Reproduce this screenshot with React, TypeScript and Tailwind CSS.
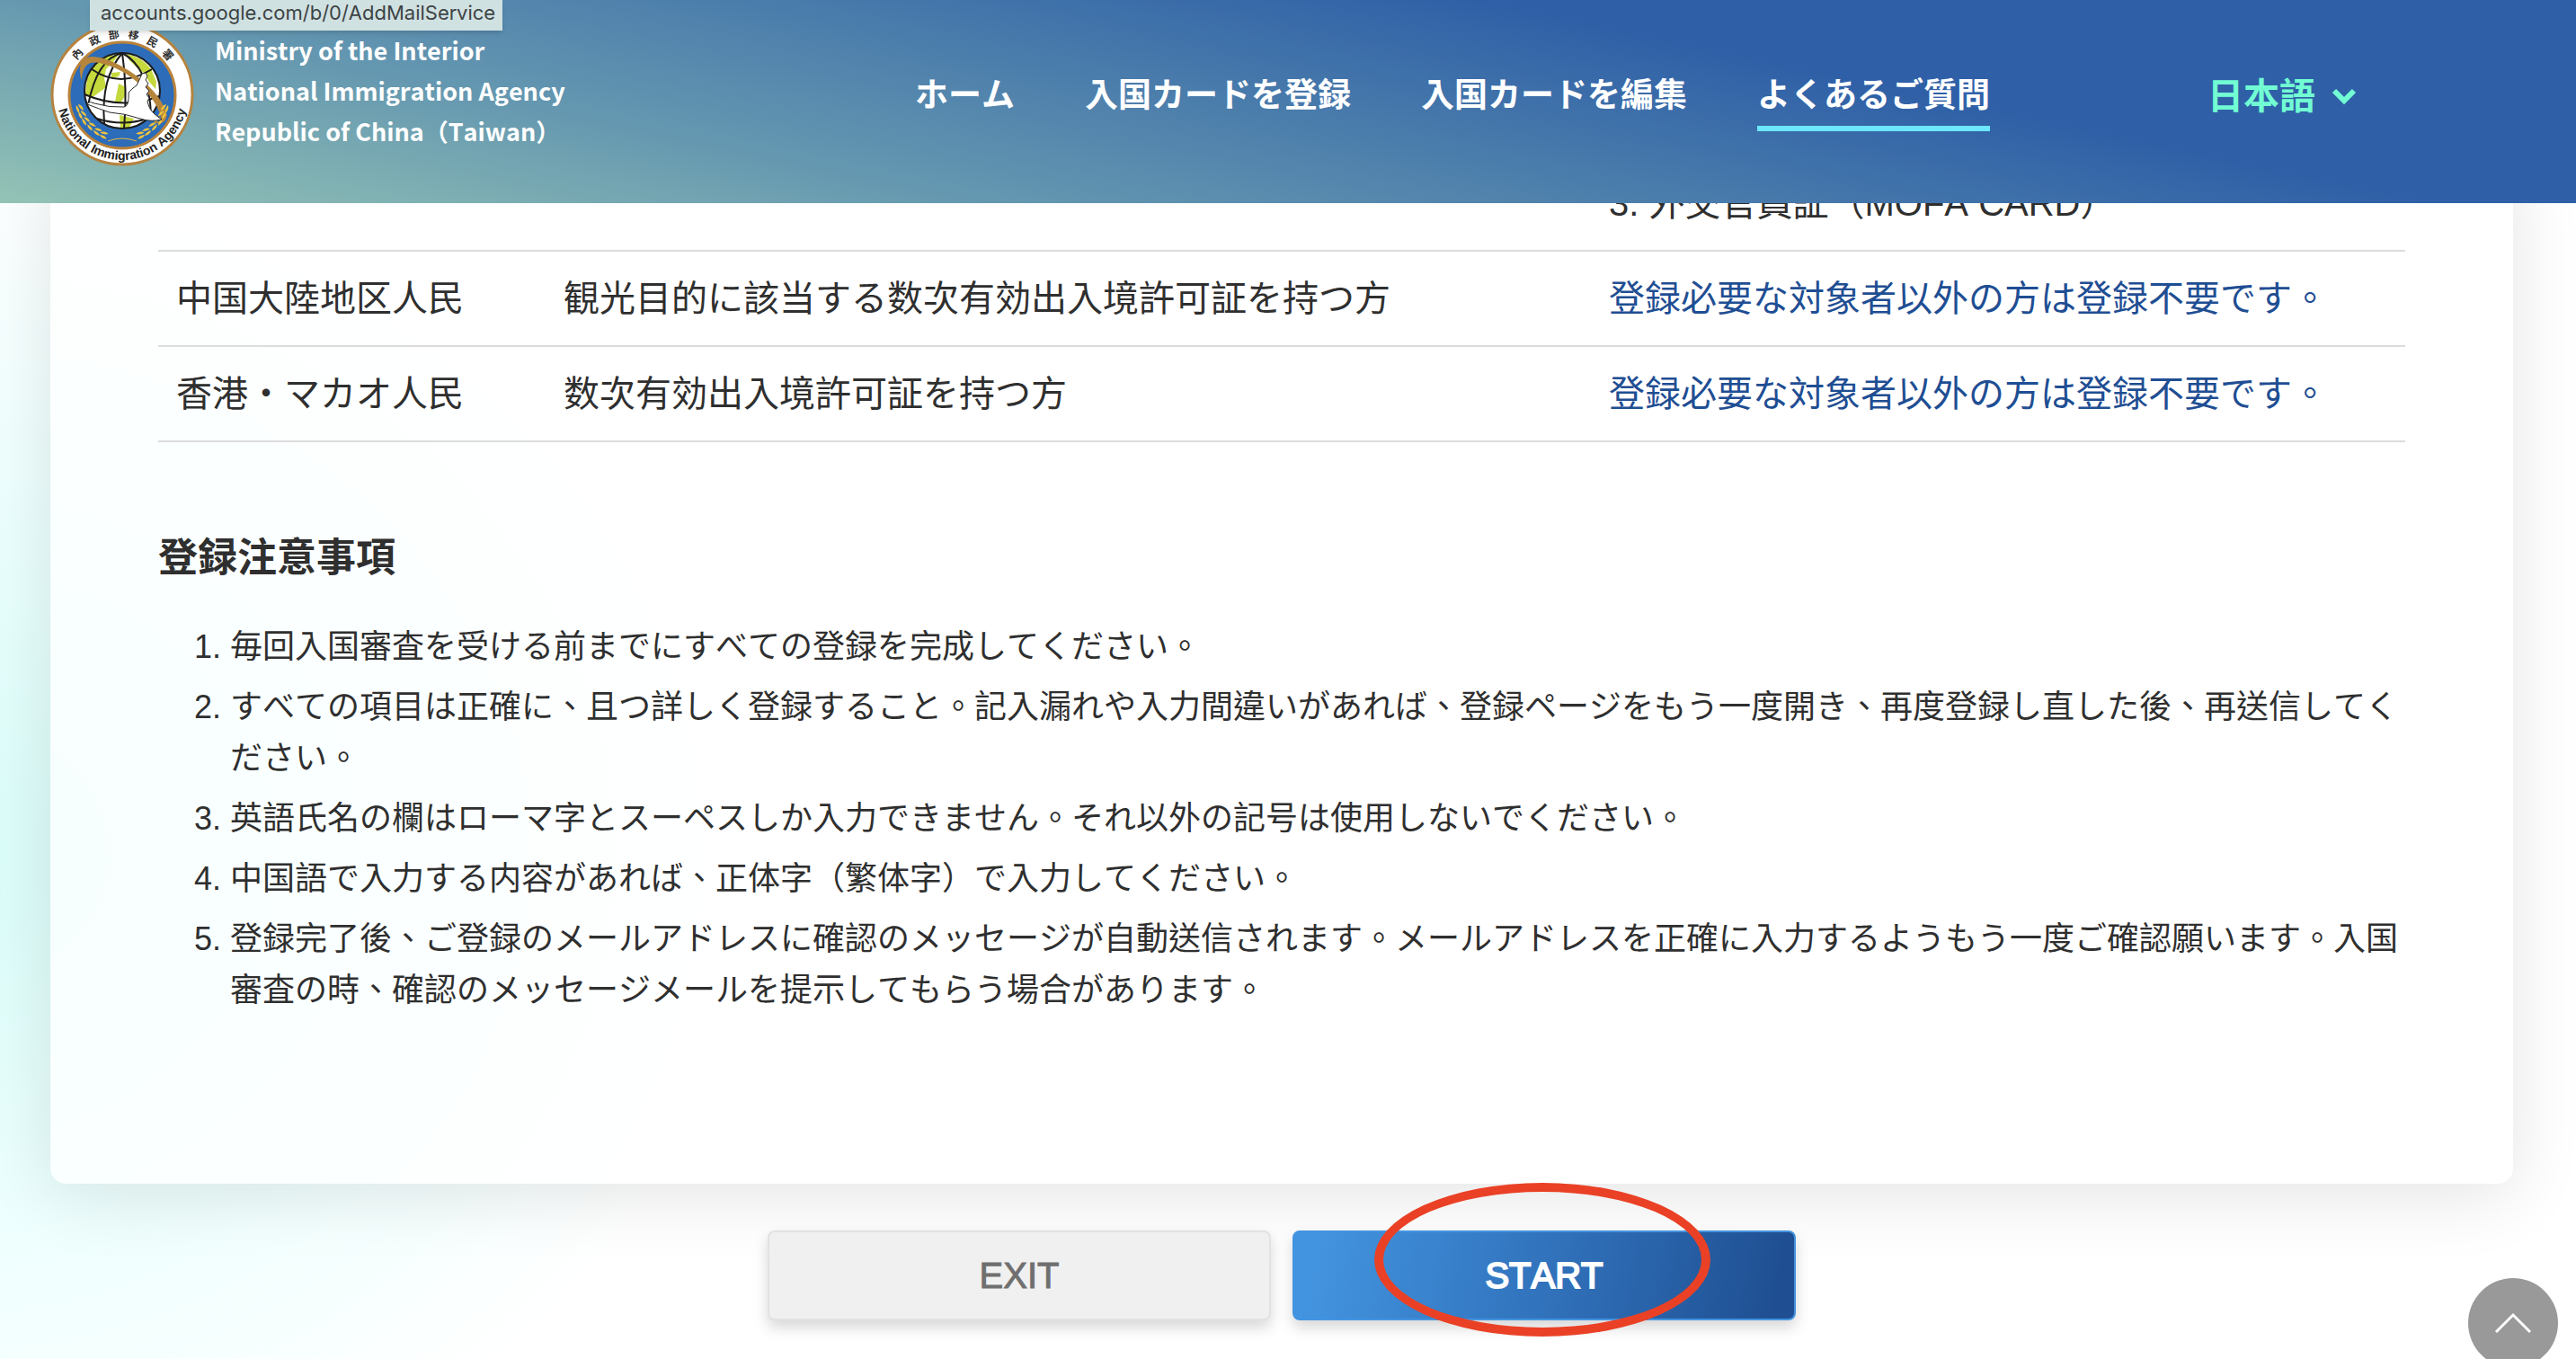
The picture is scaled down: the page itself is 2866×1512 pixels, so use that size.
interface PermitRow {
  who: string;
  permit: string;
  note: string;
  link?: boolean;
}

const NAV_ITEMS = ['ホーム', '入国カードを登録', '入国カードを編集', 'よくあるご質問'];
const ACTIVE_ITEM = 'よくあるご質問';

const ROWS: PermitRow[] = [
  { who: '', permit: '', note: '3. 外交官員証（MOFA CARD）' },
  {
    who: '中国大陸地区人民',
    permit: '観光目的に該当する数次有効出入境許可証を持つ方',
    note: '登録必要な対象者以外の方は登録不要です。',
    link: true,
  },
  {
    who: '香港・マカオ人民',
    permit: '数次有効出入境許可証を持つ方',
    note: '登録必要な対象者以外の方は登録不要です。',
    link: true,
  },
];

const NOTES = [
  '毎回入国審査を受ける前までにすべての登録を完成してください。',
  'すべての項目は正確に、且つ詳しく登録すること。記入漏れや入力間違いがあれば、登録ページをもう一度開き、再度登録し直した後、再送信してください。',
  '英語氏名の欄はローマ字とスーペスしか入力できません。それ以外の記号は使用しないでください。',
  '中国語で入力する内容があれば、正体字（繁体字）で入力してください。',
  '登録完了後、ご登録のメールアドレスに確認のメッセージが自動送信されます。メールアドレスを正確に入力するようもう一度ご確認願います。入国審査の時、確認のメッセージメールを提示してもらう場合があります。',
];

const SEAL_CHARS = [
  { char: '內', angle: -48 },
  { char: '政', angle: -27 },
  { char: '部', angle: -8 },
  { char: '移', angle: 11 },
  { char: '民', angle: 30 },
  { char: '署', angle: 49 },
];

// Leaves of the left laurel branch; the right one is mirrored
const LEAVES = [
  [32, 95, 60],
  [35, 102, 55],
  [39, 109, 50],
  [45, 115, 38],
  [52, 121, 28],
  [59, 125, 18],
];

function Laurel() {
  return (
    <g fill="#f0c33c">
      {LEAVES.map(([x, y, angle]) => (
        <g key={y} transform={`translate(${x} ${y}) rotate(${angle})`}>
          <path d="M-4 -1Q-1 -5 5 -3Q2 0 -4 -1Z" />
          <path d="M-4 1Q-1 5 5 3Q2 0 -4 1Z" />
        </g>
      ))}
    </g>
  );
}

function AgencySeal() {
  return (
    <svg className="size-40 shrink-0" viewBox="0 0 160 160" role="img" aria-label="National Immigration Agency">
      <circle cx="80" cy="80" r="78" fill="#fff" stroke="#b58340" strokeWidth="3" />
      <circle cx="80" cy="81" r="59" fill="#2c6cb9" stroke="#b9823a" strokeWidth="3" />

      {/* Ring lettering */}
      <g fill="#333" fontSize="12" fontWeight="700" textAnchor="middle" fontFamily="'Noto Sans CJK TC', sans-serif">
        {SEAL_CHARS.map(({ char, angle }) => (
          <text key={char} x="80" y="17" transform={`rotate(${angle} 80 80)`}>{char}</text>
        ))}
      </g>
      <path id="seal-arc" d="M7 80A73 73 0 0 0 153 80" fill="none" />
      <text fill="#222" fontSize="14" fontWeight="700" textAnchor="middle" fontFamily="'Liberation Sans', sans-serif">
        <textPath href="#seal-arc" startOffset="50%">National Immigration Agency</textPath>
      </text>

      {/* Globe */}
      <circle cx="80" cy="76" r="42" fill="#fff" />
      <g fill="#c5d93c">
        <path d="M41 62Q47 46 60 38L76 36L70 44L62 52L60 62L62 72L54 78L46 84L39 80Z" />
        <path d="M84 35Q102 38 112 52L118 66L117 74L110 66L104 56L96 50L88 42Z" />
        <path d="M76 68L84 72L83 82L78 90L72 88L74 78Z" />
        <path d="M77 103L93 107L88 117L78 118Z" />
        <path d="M68 56L78 55L76 60L68 62Z" />
      </g>
      <g fill="none" stroke="#1c1c1c" strokeWidth="2">
        <circle cx="80" cy="76" r="42" />
        <path d="M80 34Q52 40 42 92" />
        <path d="M80 34Q56 62 60 112" />
        <path d="M80 34Q86 74 82 118" />
        <path d="M80 34Q110 50 112 102" />
        <path d="M46 52Q78 74 113 52" />
        <path d="M38 80Q80 98 121 82" />
        <path d="M52 107Q80 116 108 107" />
      </g>

      {/* Orbit */}
      <path
        d="M35 64C30 50 34 39 46 38C72 38 124 72 130 104L124 112C124 92 96 55 58 46C44 42 36 46 35 64Z"
        fill="#b5853c"
      />
      <path d="M128 102Q129 113 116 111" fill="none" stroke="#b5853c" strokeWidth="2" />

      <Laurel />
      <g transform="translate(160 0) scale(-1 1)">
        <Laurel />
      </g>
      <path d="M64 132Q80 126 96 132" fill="none" stroke="#e2b93b" strokeWidth="1" />

      {/* Dove */}
      <path
        d="M41 90Q44 87 49 90Q66 95 82 94Q88 93 87 78Q90 74 96 70Q100 62 102 57L106 56L108 60L106 64L109 68L106 72L110 76L107 80L110 84L108 88L110 94Q112 100 124 108Q112 111 100 107Q82 101 66 100Q54 96 41 91Z"
        fill="#fff"
        stroke="#2a2a2a"
        strokeWidth="1"
      />
    </svg>
  );
}

export default function App() {
  return (
    <div className="relative min-h-screen overflow-hidden bg-white bg-[radial-gradient(ellipse_900px_780px_at_-60px_950px,#d9fdf9_0%,#ecfffe_50%,#ffffff_100%)] font-['Liberation_Sans','Noto_Sans_CJK_TC',sans-serif] text-[#2f2f2f] [font-kerning:none]">
      {/* Header */}
      <header className="relative z-10 flex h-[226px] items-start bg-[linear-gradient(12deg,#94c3b5_0%,#6598b0_28%,#2f60a7_69%)] pl-14">
        <a href="#home" className="mt-[25px] flex items-start gap-[23px]">
          <AgencySeal />
          <span className="mt-2 font-['Noto_Sans_CJK_TC',sans-serif] text-[27px] leading-[45px] font-bold whitespace-nowrap text-white">
            Ministry of the Interior
            <br />
            National Immigration Agency
            <br />
            Republic of China（Taiwan）
          </span>
        </a>

        <div className="mt-[74px] mr-[244px] ml-auto flex items-start gap-[242px]">
          <nav className="flex gap-[78px] text-[37px] leading-[66px] font-bold whitespace-nowrap text-white">
            {NAV_ITEMS.map((item) => (
              <a
                key={item}
                href="#nav"
                aria-current={item === ACTIVE_ITEM ? 'page' : undefined}
                className={`border-b-6 ${item === ACTIVE_ITEM ? 'border-[#6ce7fd]' : 'border-transparent'}`}
              >
                {item}
              </a>
            ))}
          </nav>
          <button className="flex items-center gap-[18px] text-[40px] leading-[66px] font-bold whitespace-nowrap text-[#72fcd3]">
            日本語
            <svg width="28" height="20" viewBox="0 0 28 20" fill="none" stroke="currentColor" strokeWidth="6">
              <path d="M3 4l11 11L25 4" />
            </svg>
          </button>
        </div>
      </header>

      {/* Link preview */}
      <div className="absolute top-0 left-[100px] z-20 bg-[#d0e1e2] pr-2 pb-1.5 pl-3 font-[Inter,sans-serif] text-[22px] leading-7 text-[#3d4344] shadow-md">
        accounts.google.com/b/0/AddMailService
      </div>

      <main className="-mt-[52px] pr-[70px] pb-[43px] pl-14">
        <section className="rounded-b-[18px] bg-white/75 px-[120px] pb-[187px] shadow-[0_12px_80px_rgba(0,0,0,0.11)]">
          <table className="w-full text-left text-[40px] leading-[64px]">
            <colgroup>
              <col className="w-[431px]" />
              <col />
              <col className="w-[906px]" />
            </colgroup>
            <tbody>
              {ROWS.map((row) => (
                <tr key={row.who} className="border-b-2 border-[#dcdcdc]">
                  <td className="px-5 py-5">{row.who}</td>
                  <td className="px-5 py-5">{row.permit}</td>
                  <td className={`px-5 py-5 ${row.link ? 'text-[#1f4e93]' : ''}`}>{row.note}</td>
                </tr>
              ))}
            </tbody>
          </table>

          <h2 className="mt-24 text-[44px] leading-[66px] font-bold">登録注意事項</h2>
          <ol className="mt-[37px] list-decimal space-y-[10px] pl-20 text-[36px] leading-[57px]">
            {NOTES.map((note) => (
              <li key={note}>{note}</li>
            ))}
          </ol>
        </section>

        {/* Actions */}
        <div className="mt-[52px] flex justify-center gap-6 text-[40px]">
          <button className="h-[100px] w-[560px] rounded-lg border-2 border-[#e2e2e2] bg-[#f0f0f0] text-[#6f6f6f] shadow-[0_8px_16px_rgba(0,0,0,0.16)] [-webkit-text-stroke:1px]">
            EXIT
          </button>
          <div className="relative">
            <button className="h-[100px] w-[560px] rounded-lg border-2 border-[#4394e0] bg-[linear-gradient(100deg,#4394e0_4%,#2f6fb8_55%,#1f4f92_96%)] text-white shadow-[0_8px_16px_rgba(0,0,0,0.16)] [-webkit-text-stroke:2px]">
              START
            </button>
            <span className="pointer-events-none absolute -top-[53px] left-[91px] h-[171px] w-[374px] rounded-[50%] border-10 border-[#ea4126]" />
          </div>
        </div>
      </main>

      {/* Back to top */}
      <button
        aria-label="Back to top"
        className="absolute right-5 -bottom-[10px] z-20 flex size-[100px] items-center justify-center rounded-full bg-[#999]"
      >
        <svg width="42" height="24" viewBox="0 0 42 24" fill="none" stroke="#fff" strokeWidth="3">
          <path d="M2 22L21 3l19 19" />
        </svg>
      </button>
    </div>
  );
}
